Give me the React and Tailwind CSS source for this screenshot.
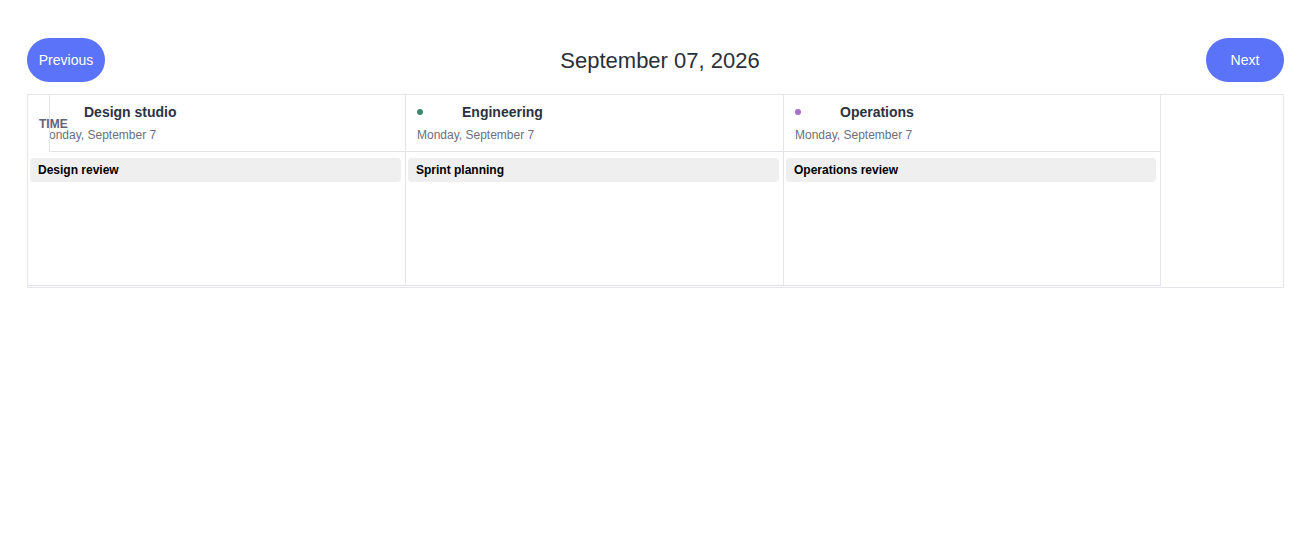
const RESOURCES = [
  { id: 'design', title: 'Design studio', dot: 'bg-[#4f7cf7]', event: 'Design review', w: 'w-[378px]' },
  { id: 'eng', title: 'Engineering', dot: 'bg-[#3b8a6e]', event: 'Sprint planning', w: 'w-[378px]' },
  { id: 'ops', title: 'Operations', dot: 'bg-[#a66fc2]', event: 'Operations review', w: 'w-[377px]' },
];

function ResourceColumn({ res }) {
  return (
    <div className={`${res.w} h-[191px] self-start shrink-0 flex flex-col border-r border-[#e4e3ea] border-b border-b-[#e2e0f0]`}>
      <div className="h-[57px] border-b border-[#e4e3ea] pl-[11px] pt-[9px]">
        <div className="flex items-center h-[16px]">
          <span className={`w-[6px] h-[6px] rounded-full ${res.dot}`} />
          <span className="ml-[39px] text-[14px] font-bold text-[#2d3142] leading-none">{res.title}</span>
        </div>
        <div className="mt-[9px] text-[12px] text-[#6b7080] leading-none">Monday, September 7</div>
      </div>
      <div className="flex-1 pl-[2px] pr-[4px] pt-[6px]">
        <div className="h-[24px] rounded-[4px] bg-[#efefef] flex items-center px-2 text-[12px] font-bold text-black">
          {res.event}
        </div>
      </div>
    </div>
  );
}

export default function App() {
  return (
    <div className="w-[1311px] h-[552px] bg-white font-['Liberation_Sans',Arial,sans-serif]">
      <div className="px-[27px] pt-[38px]">
        <div className="flex items-center justify-between">
          <button className="h-[44px] w-[78px] rounded-full bg-[#5a73f8] text-white text-[14px]">
            Previous
          </button>
          <h1 className="text-[22px] text-[#2a2f3a] ml-[9px]">September 07, 2026</h1>
          <button className="h-[44px] w-[78px] rounded-full bg-[#5a73f8] text-white text-[14px]">
            Next
          </button>
        </div>

        <div className="relative mt-[12px] h-[194px] border border-[#e6e5ec] flex">
          {RESOURCES.map((r) => (
            <ResourceColumn key={r.id} res={r} />
          ))}
          <div className="flex-1" />

          {/* time gutter sits over the first column */}
          <div className="absolute left-0 top-0 w-[22px] h-[57px] bg-white border-r border-[#e4e3ea]">
            <span className="absolute left-[11px] top-[23px] text-[12px] font-bold text-[#5f6478] leading-none whitespace-nowrap">
              TIME
            </span>
          </div>
        </div>
      </div>
    </div>
  );
}
